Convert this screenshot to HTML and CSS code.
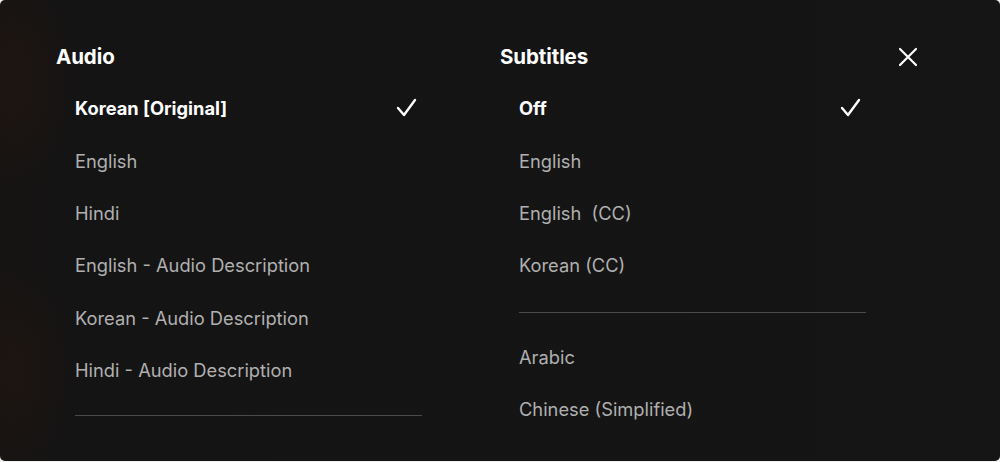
FILE: index.html
```html
<!DOCTYPE html>
<html lang="en">
<head>
<meta charset="utf-8">
<title>Audio &amp; Subtitles</title>
<link rel="stylesheet" href="styles.css">
</head>
<body>
<div class="panel">
  <section class="col col-audio">
    <h2 class="heading">Audio</h2>
    <ul class="list">
      <li class="item selected"><span>Korean [Original]</span>
        <svg class="check" viewBox="0 0 24 24" width="24" height="24"><polyline points="4,12 10,19 21,4" fill="none" stroke="#fff" stroke-width="2.4" stroke-linecap="round" stroke-linejoin="round"/></svg>
      </li>
      <li class="item">English</li>
      <li class="item">Hindi</li>
      <li class="item">English - Audio Description</li>
      <li class="item">Korean - Audio Description</li>
      <li class="item">Hindi - Audio Description</li>
      <li class="divider"></li>
    </ul>
  </section>
  <section class="col col-subs">
    <h2 class="heading">Subtitles</h2>
    <ul class="list">
      <li class="item selected"><span>Off</span>
        <svg class="check" viewBox="0 0 24 24" width="24" height="24"><polyline points="4,12 10,19 21,4" fill="none" stroke="#fff" stroke-width="2.4" stroke-linecap="round" stroke-linejoin="round"/></svg>
      </li>
      <li class="item">English</li>
      <li class="item">English&nbsp; (CC)</li>
      <li class="item">Korean (CC)</li>
      <li class="divider"></li>
      <li class="item">Arabic</li>
      <li class="item">Chinese (Simplified)</li>
    </ul>
  </section>
  <button class="close" aria-label="Close">
    <svg viewBox="0 0 24 24" width="24" height="24"><path d="M4 4 L20 20 M20 4 L4 20" fill="none" stroke="#fff" stroke-width="2.2" stroke-linecap="round"/></svg>
  </button>
</div>
</body>
</html>
```
FILE: styles.css
```css
html, body {
  margin: 0;
  padding: 0;
  background: #f2f2f2;
}
body {
  font-family: Inter, "Noto Sans", "Liberation Sans", sans-serif;
}
.panel {
  box-sizing: border-box;
  width: 1000px;
  height: 461px;
  border-radius: 5px;
  overflow: hidden;
  display: flex;
  align-items: flex-start;
  padding: 43px 0 0 56px;
  background:
    radial-gradient(ellipse 60px 110px at 15px 80px, rgba(50, 25, 15, 0.3), rgba(50, 25, 15, 0) 100%),
    radial-gradient(ellipse 60px 110px at 15px 370px, rgba(50, 25, 15, 0.25), rgba(50, 25, 15, 0) 100%),
    linear-gradient(90deg, #161413 0px, #151414 60px, #151515 100%);
}
.col {
  width: 366px;
  flex: none;
}
.col + .col {
  margin-left: 78px;
}
.heading {
  margin: 0 0 11px;
  height: 28px;
  line-height: 28px;
  font-size: 20.5px;
  font-weight: 700;
  color: #ffffff;
  letter-spacing: -0.1px;
}
.list {
  list-style: none;
  margin: 0 0 0 19px;
  padding: 0;
}
.item {
  height: 52.4px;
  display: flex;
  align-items: center;
  justify-content: space-between;
  padding-right: 4px;
  font-size: 18.3px;
  color: #b0b0b0;
}
.item.selected {
  color: #ffffff;
  font-weight: 700;
}
.check {
  display: block;
  width: 24px;
  height: 24px;
}
.divider {
  height: 1px;
  background: #4a4a4a;
  margin: 20px 0 18px;
}
.col-audio .divider {
  margin-top: 19px;
}
.close {
  flex: none;
  margin: 2px 0 0 30px;
  padding: 0;
  width: 24px;
  height: 24px;
  border: 0;
  background: transparent;
  cursor: pointer;
}
.close svg {
  display: block;
  width: 24px;
  height: 24px;
}
```
